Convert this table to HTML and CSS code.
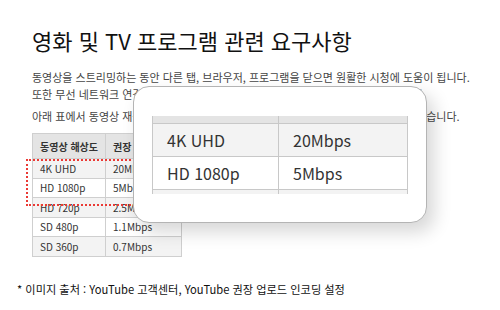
FILE: index.html
```html
<!DOCTYPE html>
<html lang="ko">
<head>
<meta charset="utf-8">
<link rel="stylesheet" href="styles.css">
</head>
<body>
<div class="page">
  <h1 class="title">영화 및 TV 프로그램 관련 요구사항</h1>
  <p class="para">동영상을 스트리밍하는 동안 다른 탭, 브라우저, 프로그램을 닫으면 원활한 시청에 도움이 됩니다.<br>또한 무선 네트워크 연결 대신 유선 연결을 사용하면 더 안정적으로 시청할 수 있습니다.</p>
  <p class="para">아래 표에서 동영상 재생에 필요한 권장 인터넷 연결 속도를 해상도별 쉽게 확인할 수 있습니다.</p>
  <table class="res">
    <thead>
      <tr><th>동영상 해상도</th><th>권장 속도</th></tr>
    </thead>
    <tbody>
      <tr><td>4K UHD</td><td>20Mbps</td></tr>
      <tr><td>HD 1080p</td><td>5Mbps</td></tr>
      <tr><td>HD 720p</td><td>2.5Mbps</td></tr>
      <tr><td>SD 480p</td><td>1.1Mbps</td></tr>
      <tr><td>SD 360p</td><td>0.7Mbps</td></tr>
    </tbody>
  </table>
  <p class="note">* 이미지 출처 : YouTube 고객센터, YouTube 권장 업로드 인코딩 설정</p>

  <div class="highlight"></div>

  <div class="zoom-card">
    <div class="zoom-clip">
      <table class="big">
        <tr class="big-head"><td></td><td></td></tr>
        <tr class="odd"><td>4K UHD</td><td>20Mbps</td></tr>
        <tr class="even"><td>HD 1080p</td><td>5Mbps</td></tr>
        <tr class="odd"><td></td><td></td></tr>
      </table>
    </div>
  </div>
</div>
</body>
</html>
```

FILE: styles.css
```css
* { box-sizing: border-box; }
html, body {
  margin: 0;
  padding: 0;
  background: #fff;
}
body {
  width: 500px;
  height: 310px;
  overflow: hidden;
  font-family: "Noto Sans CJK KR", "Noto Sans", sans-serif;
}
.page {
  position: relative;
  width: 500px;
  height: 310px;
  padding: 27px 0 0 32px;
}
.title {
  margin: 0;
  font-size: 22px;
  line-height: 27px;
  font-weight: 400;
  color: #111;
  white-space: nowrap;
}
.para {
  margin: 15px 0 0 0;
  font-size: 11px;
  line-height: 17px;
  color: #444;
  white-space: nowrap;
}
.para + .para {
  margin-top: 5px;
}
.res {
  margin-top: 8px;
  border-collapse: collapse;
  font-size: 10px;
  color: #333;
}
.res th, .res td {
  border: 1px solid #cfcfcf;
  text-align: left;
  padding: 0 7px;
  height: 19.5px;
  white-space: nowrap;
}
.res th {
  height: 25px;
  background: #e4e4e4;
  font-weight: 700;
}
.res th:first-child, .res td:first-child { width: 72px; }
.res th:last-child, .res td:last-child { width: 76px; }
.res tbody tr:nth-child(odd) td { background: #f3f3f3; }
.res tbody tr:nth-child(even) td { background: #fff; }
.note {
  margin: 24px 0 0 -15px;
  font-size: 11.2px;
  line-height: 17px;
  color: #111;
  white-space: nowrap;
}
.highlight {
  position: absolute;
  left: 26px;
  top: 159px;
  width: 140px;
  height: 47px;
  border: 2px dotted #ea3a35;
}
.zoom-card {
  position: absolute;
  left: 133px;
  top: 86px;
  width: 294px;
  height: 137px;
  background: #fff;
  border: 1px solid #b4b4b4;
  border-radius: 16px;
  box-shadow: 7px 9px 18px rgba(0, 0, 0, 0.16);
  padding: 29px 0 0 18px;
}
.zoom-clip {
  width: 256px;
  height: 78px;
  overflow: hidden;
}
.big {
  border-collapse: collapse;
  margin-top: -26px;
  font-size: 16px;
  color: #333;
}
.big td {
  border: 1.5px solid #c8c8c8;
  height: 33px;
  padding: 0 14px;
  white-space: nowrap;
}
.big td:first-child { width: 126px; }
.big td:last-child { width: 129px; }
.big-head td { background: #e4e4e4; }
.big .odd td { background: #f3f3f3; }
.big .even td { background: #fff; }
```
